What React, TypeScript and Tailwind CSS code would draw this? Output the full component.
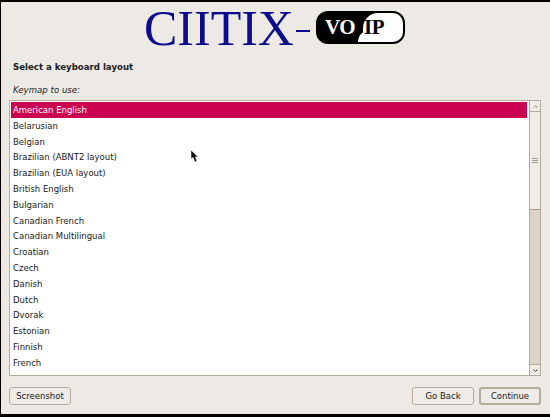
const items = ["American English","Belarusian","Belgian","Brazilian (ABNT2 layout)","Brazilian (EUA layout)","British English","Bulgarian","Canadian French","Canadian Multilingual","Croatian","Czech","Danish","Dutch","Dvorak","Estonian","Finnish","French"];

function Btn({ label, className }: { label: string; className: string }) {
  return (
    <button className={`h-[18px] rounded-[3px] bg-[#efebe7] text-[8.5px] text-[#1a1a1a] leading-none ${className}`}>
      {label}
    </button>
  );
}

function Cursor() {
  return (
    <svg className="absolute left-[189px] top-[147px]" width="9" height="14" viewBox="0 0 9 14">
      <path d="M1 1 L1 10 L3 8.5 L5 13 L7 12 L5.2 8 L8 8 Z" fill="#111" stroke="#fff" strokeWidth="0.5" />
    </svg>
  );
}

export default function App() {
  return (
    <div className="relative w-[550px] h-[417px] overflow-hidden bg-[#edeae6] border-t-[2px] border-b-[3px] border-l-[1px] border-black font-['DejaVu_Sans',sans-serif] flex flex-col">
      <div className="h-[50px] flex items-start pl-[143px] shrink-0">
        <span className="font-['Liberation_Serif',serif] text-[50px] leading-none text-[#0b0b8c] mt-[1px]">CIITIX</span>
        <div className="ml-[2px] mt-[28px] w-[14px] h-[2px] bg-[#0b0b8c]" />
        <div className="ml-[6px] mt-[9px] w-[89px] h-[33px] rounded-[12px] border-[2px] border-black bg-black relative overflow-hidden flex items-center font-['Liberation_Serif',serif] font-bold text-[21px]">
          <div className="absolute top-0 bottom-0 right-0 w-[40px] bg-white rounded-tl-[15px]" />
          <div className="absolute bottom-0 right-[30px] w-[15px] h-[12px] bg-white rounded-tl-[12px]" />
          <span className="relative text-white ml-[7px] tracking-[-0.5px]">VO</span>
          <span className="relative text-black ml-[9px] tracking-[-0.5px]">IP</span>
        </div>
      </div>
      <div className="pl-[12px] pt-[9px] text-[8.6px] font-bold text-[#1a1a1a] leading-[12px]">Select a keyboard layout</div>
      <div className="pl-[12px] pt-[11px] text-[8.6px] italic text-[#1a1a1a] leading-[12px]">Keymap to use:</div>
      <div className="ml-[8px] mt-[4px] w-[532px] h-[276px] border border-[#b5aa9c] bg-white flex">
        <div className="flex-1 overflow-hidden pt-[1px] pr-[1px] pl-[1px]">
          {items.map((t, i) => (
            <div key={t} className={`h-[15.8px] leading-[17.4px] pl-[2px] text-[8.5px] ${i === 0 ? "bg-[#cc0050] text-white" : "text-[#1a1a1a]"}`}>{t}</div>
          ))}
        </div>
        <div className="w-[11px] bg-[#dcd3c8] border-l border-[#b5aa9c] flex flex-col ml-[1px]">
          <div className="h-[11px] bg-[#efebe7] border-b border-[#b5aa9c] flex items-center justify-center">
            <svg width="5" height="3" viewBox="0 0 5 3"><path d="M0.5 2.5 L2.5 0.5 L4.5 2.5" fill="none" stroke="#888" /></svg>
          </div>
          <div className="h-[98px] bg-[#f0ece8] border-b border-[#a89c8e] flex flex-col items-center justify-center gap-[1px]">
            <div className="w-[6px] h-px bg-[#a89c8e]" />
            <div className="w-[6px] h-px bg-[#a89c8e]" />
            <div className="w-[6px] h-px bg-[#a89c8e]" />
          </div>
          <div className="flex-1" />
          <div className="h-[11px] bg-[#efebe7] border-t border-[#b5aa9c] flex items-center justify-center">
            <svg width="5" height="3" viewBox="0 0 5 3"><path d="M0.5 0.5 L2.5 2.5 L4.5 0.5" fill="none" stroke="#333" /></svg>
          </div>
        </div>
      </div>
      <div className="flex mt-[11px] pl-[8px]">
        <Btn label="Screenshot" className="w-[62px] border border-[#b5aa9c]" />
        <div className="flex-1" />
        <Btn label="Go Back" className="w-[62px] border border-[#b5aa9c] mr-[5px]" />
        <Btn label="Continue" className="w-[62px] border-[2px] border-[#b5aa9c] mr-[9px]" />
      </div>
      <Cursor />
    </div>
  );
}
